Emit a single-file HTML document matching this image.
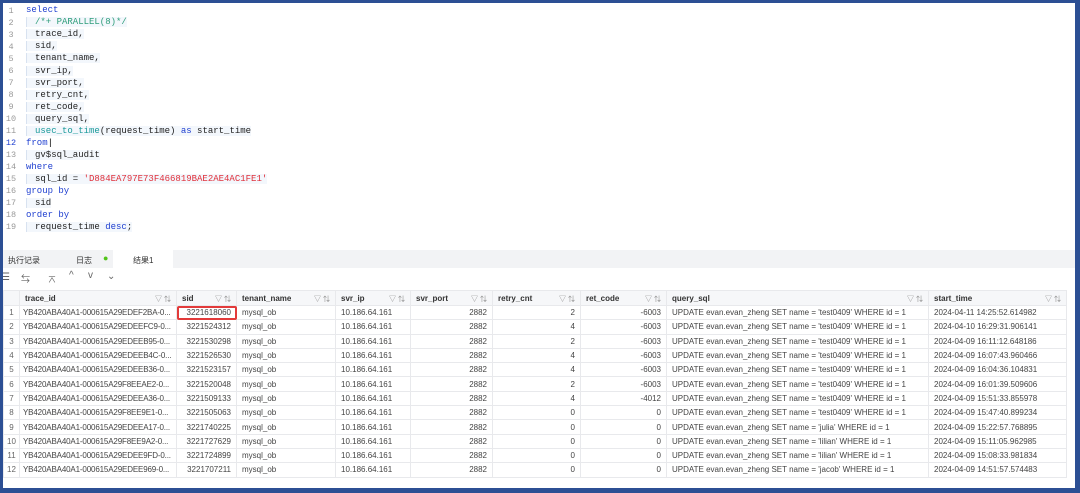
<!DOCTYPE html>
<html><head><meta charset="utf-8"><style>
*{margin:0;padding:0;box-sizing:border-box}
body{width:1080px;height:493px;background:#2c4f94;position:relative;overflow:hidden;font-family:"Liberation Sans","Noto Sans CJK SC",sans-serif}
#f{position:absolute;left:3px;top:3px;width:1072px;height:485px;background:#fff;overflow:hidden}
.code{position:absolute;left:0;top:1px;font-family:"Liberation Mono",monospace;font-size:9px;color:#222}
.ln{position:absolute;left:0;width:16px;text-align:center;color:#999;font-size:8.5px}
.cl{position:absolute;left:23px;white-space:pre}
.ind{border-left:1px solid #d8e2f0;background:#f3f7fc;padding-left:8px}
.k{color:#1f3fd0}.c{color:#2e9d7a}.s{color:#e0303a}.fn{color:#1a9a9a}
#tabs{position:absolute;left:0;top:247px;width:1072px;height:18px;background:#f2f3f5;font-size:8px;color:#333}
#tabs span{position:absolute;top:5px}
#act{position:absolute;left:110px;top:0;width:60px;height:18px;background:#fff}
#tb{position:absolute;top:267px;left:0;font-size:10px;color:#666}
table{position:absolute;left:0;top:287px;border-collapse:collapse;font-size:8px;color:#444;table-layout:fixed;width:1063px}
td,th{border:1px solid #e8e9ec;height:14.3px;padding:0 5px;white-space:nowrap;overflow:hidden;text-overflow:ellipsis}
td.t{padding:0 3px;letter-spacing:-0.15px}
th{background:#f6f7f9;text-align:left;font-weight:bold;color:#333;position:relative;height:15px}
th i{position:absolute;right:5px;font-style:normal;color:#888;font-weight:normal;font-size:7px}
td.n{text-align:center;color:#666;padding:0}
td.r{text-align:right}
</style></head><body><div id="f">
<div class="code">
<div class="ln" style="top:2px">1</div><div class="cl k" style="top:1px">select</div>
<div class="ln" style="top:14px">2</div><div class="cl ind c" style="top:13.1px">/*+ PARALLEL(8)*/</div>
<div class="ln" style="top:26px">3</div><div class="cl ind" style="top:25.2px">trace_id,</div>
<div class="ln" style="top:38px">4</div><div class="cl ind" style="top:37.3px">sid,</div>
<div class="ln" style="top:50px">5</div><div class="cl ind" style="top:49.4px">tenant_name,</div>
<div class="ln" style="top:62px">6</div><div class="cl ind" style="top:61.5px">svr_ip,</div>
<div class="ln" style="top:74px">7</div><div class="cl ind" style="top:73.6px">svr_port,</div>
<div class="ln" style="top:86px">8</div><div class="cl ind" style="top:85.7px">retry_cnt,</div>
<div class="ln" style="top:98px">9</div><div class="cl ind" style="top:97.8px">ret_code,</div>
<div class="ln" style="top:110px">10</div><div class="cl ind" style="top:109.9px">query_sql,</div>
<div class="ln" style="top:122px">11</div><div class="cl ind" style="top:122px"><span class="fn">usec_to_time</span>(request_time) <span class="k">as</span> start_time</div>
<div class="ln" style="top:134px;color:#1f3fd0">12</div><div class="cl k" style="top:134px">from<span style="color:#000">|</span></div>
<div class="ln" style="top:146px">13</div><div class="cl ind" style="top:146px">gv$sql_audit</div>
<div class="ln" style="top:158px">14</div><div class="cl k" style="top:158px">where</div>
<div class="ln" style="top:170px">15</div><div class="cl ind" style="top:170px">sql_id = <span class="s">'D884EA797E73F466819BAE2AE4AC1FE1'</span></div>
<div class="ln" style="top:182px">16</div><div class="cl k" style="top:182px">group by</div>
<div class="ln" style="top:194px">17</div><div class="cl ind" style="top:194px">sid</div>
<div class="ln" style="top:206px">18</div><div class="cl k" style="top:206px">order by</div>
<div class="ln" style="top:218px">19</div><div class="cl ind" style="top:218px">request_time <span class="k">desc</span>;</div>
</div>
<div id="tabs"><div id="act"></div><span style="left:5px">执行记录</span><span style="left:73px">日志</span><span style="left:100px;color:#52c41a;top:3px;font-size:9px">●</span><span style="left:130px">结果1</span></div>
<div id="tb"><span style="position:absolute;left:-2px;top:2px">☰</span><span style="position:absolute;left:18px;top:2px;font-size:9px">⇆</span><span style="position:absolute;left:44px;top:1px">⌅</span><span style="position:absolute;left:66px;top:0">^</span><span style="position:absolute;left:85px;top:0">v</span><span style="position:absolute;left:104px;top:1px">⌄</span></div>
<table>
<colgroup><col style="width:16px"><col style="width:157px"><col style="width:60px"><col style="width:99px"><col style="width:75px"><col style="width:82px"><col style="width:88px"><col style="width:86px"><col style="width:262px"><col style="width:138px"></colgroup>
<tr><th></th><th>trace_id<i>▽ ⇅</i></th><th>sid<i>▽ ⇅</i></th><th>tenant_name<i>▽ ⇅</i></th><th>svr_ip<i>▽ ⇅</i></th><th>svr_port<i>▽ ⇅</i></th><th>retry_cnt<i>▽ ⇅</i></th><th>ret_code<i>▽ ⇅</i></th><th>query_sql<i>▽ ⇅</i></th><th>start_time<i>▽ ⇅</i></th></tr>
<tr><td class="n">1</td><td class="t">YB420ABA40A1-000615A29EDEF2BA-0...</td><td class="r" style="outline:2px solid #e23a3a;outline-offset:-2px;border-radius:2px">3221618060</td><td>mysql_ob</td><td>10.186.64.161</td><td class="r">2882</td><td class="r">2</td><td class="r">-6003</td><td>UPDATE evan.evan_zheng SET name = 'test0409' WHERE id = 1</td><td>2024-04-11 14:25:52.614982</td></tr>
<tr><td class="n">2</td><td class="t">YB420ABA40A1-000615A29EDEEFC9-0...</td><td class="r">3221524312</td><td>mysql_ob</td><td>10.186.64.161</td><td class="r">2882</td><td class="r">4</td><td class="r">-6003</td><td>UPDATE evan.evan_zheng SET name = 'test0409' WHERE id = 1</td><td>2024-04-10 16:29:31.906141</td></tr>
<tr><td class="n">3</td><td class="t">YB420ABA40A1-000615A29EDEEB95-0...</td><td class="r">3221530298</td><td>mysql_ob</td><td>10.186.64.161</td><td class="r">2882</td><td class="r">2</td><td class="r">-6003</td><td>UPDATE evan.evan_zheng SET name = 'test0409' WHERE id = 1</td><td>2024-04-09 16:11:12.648186</td></tr>
<tr><td class="n">4</td><td class="t">YB420ABA40A1-000615A29EDEEB4C-0...</td><td class="r">3221526530</td><td>mysql_ob</td><td>10.186.64.161</td><td class="r">2882</td><td class="r">4</td><td class="r">-6003</td><td>UPDATE evan.evan_zheng SET name = 'test0409' WHERE id = 1</td><td>2024-04-09 16:07:43.960466</td></tr>
<tr><td class="n">5</td><td class="t">YB420ABA40A1-000615A29EDEEB36-0...</td><td class="r">3221523157</td><td>mysql_ob</td><td>10.186.64.161</td><td class="r">2882</td><td class="r">4</td><td class="r">-6003</td><td>UPDATE evan.evan_zheng SET name = 'test0409' WHERE id = 1</td><td>2024-04-09 16:04:36.104831</td></tr>
<tr><td class="n">6</td><td class="t">YB420ABA40A1-000615A29F8EEAE2-0...</td><td class="r">3221520048</td><td>mysql_ob</td><td>10.186.64.161</td><td class="r">2882</td><td class="r">2</td><td class="r">-6003</td><td>UPDATE evan.evan_zheng SET name = 'test0409' WHERE id = 1</td><td>2024-04-09 16:01:39.509606</td></tr>
<tr><td class="n">7</td><td class="t">YB420ABA40A1-000615A29EDEEA36-0...</td><td class="r">3221509133</td><td>mysql_ob</td><td>10.186.64.161</td><td class="r">2882</td><td class="r">4</td><td class="r">-4012</td><td>UPDATE evan.evan_zheng SET name = 'test0409' WHERE id = 1</td><td>2024-04-09 15:51:33.855978</td></tr>
<tr><td class="n">8</td><td class="t">YB420ABA40A1-000615A29F8EE9E1-0...</td><td class="r">3221505063</td><td>mysql_ob</td><td>10.186.64.161</td><td class="r">2882</td><td class="r">0</td><td class="r">0</td><td>UPDATE evan.evan_zheng SET name = 'test0409' WHERE id = 1</td><td>2024-04-09 15:47:40.899234</td></tr>
<tr><td class="n">9</td><td class="t">YB420ABA40A1-000615A29EDEEA17-0...</td><td class="r">3221740225</td><td>mysql_ob</td><td>10.186.64.161</td><td class="r">2882</td><td class="r">0</td><td class="r">0</td><td>UPDATE evan.evan_zheng SET name = 'julia' WHERE id = 1</td><td>2024-04-09 15:22:57.768895</td></tr>
<tr><td class="n">10</td><td class="t">YB420ABA40A1-000615A29F8EE9A2-0...</td><td class="r">3221727629</td><td>mysql_ob</td><td>10.186.64.161</td><td class="r">2882</td><td class="r">0</td><td class="r">0</td><td>UPDATE evan.evan_zheng SET name = 'lilian' WHERE id = 1</td><td>2024-04-09 15:11:05.962985</td></tr>
<tr><td class="n">11</td><td class="t">YB420ABA40A1-000615A29EDEE9FD-0...</td><td class="r">3221724899</td><td>mysql_ob</td><td>10.186.64.161</td><td class="r">2882</td><td class="r">0</td><td class="r">0</td><td>UPDATE evan.evan_zheng SET name = 'lilian' WHERE id = 1</td><td>2024-04-09 15:08:33.981834</td></tr>
<tr><td class="n">12</td><td class="t">YB420ABA40A1-000615A29EDEE969-0...</td><td class="r">3221707211</td><td>mysql_ob</td><td>10.186.64.161</td><td class="r">2882</td><td class="r">0</td><td class="r">0</td><td>UPDATE evan.evan_zheng SET name = 'jacob' WHERE id = 1</td><td>2024-04-09 14:51:57.574483</td></tr>
</table>
</div></body></html>
